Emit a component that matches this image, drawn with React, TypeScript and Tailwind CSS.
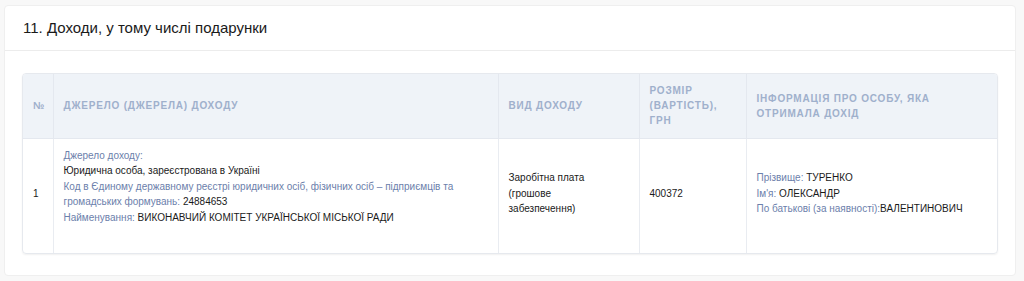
export default function App() {
  const th = "border-r border-[#e4e8ef] px-[10px] text-left align-middle text-[10px] font-bold uppercase leading-[15px] tracking-[0.8px] text-[#9fb0cc]";
  const td = "border-r border-[#e9ecf1] px-[10px] pb-[5px] align-middle text-[10px] leading-[15.5px] text-[#1a1a1a]";
  const lbl = "text-[#6c80ab]";
  return (
    <div className="min-h-[281px] w-[1024px] bg-[#f8f8f8] px-[4px] pt-[5px] font-['Liberation_Sans',Arial,sans-serif]">
      <div className="w-[1012px] rounded-[4px] border border-[#efefef] bg-white">
        <div className="flex h-[45px] items-center border-b border-[#ececec] px-[18px]">
          <h2 className="text-[15px] font-normal text-[#1a1a1a]">11. Доходи, у тому числі подарунки</h2>
        </div>
        <div className="px-[17px] pb-[21px] pt-[22px]">
          <div className="overflow-hidden rounded-[4px] border border-[#e6e9ee] shadow-[0_1px_2px_rgba(0,0,0,0.06)]">
            <table className="w-full table-fixed border-collapse">
              <colgroup>
                <col className="w-[30px]" />
                <col className="w-[445px]" />
                <col className="w-[141px]" />
                <col className="w-[107px]" />
                <col />
              </colgroup>
              <thead>
                <tr className="h-[64px] border-b border-[#e4e8ef] bg-[#eff3f8]">
                  <th className={th + " px-[8px] tracking-normal"}>№</th>
                  <th className={th}>Джерело (джерела) доходу</th>
                  <th className={th}>Вид доходу</th>
                  <th className={th}>Розмір (вартість), грн</th>
                  <th className={th + " border-r-0"}>Інформація про особу, яка отримала дохід</th>
                </tr>
              </thead>
              <tbody>
                <tr>
                  <td className={td + " px-[8px]"}>1</td>
                  <td className={td + " pb-[28px] pt-[9px]"}>
                    <div className={lbl}>Джерело доходу:</div>
                    <div>Юридична особа, зареєстрована в Україні</div>
                    <div>
                      <span className={lbl}>Код в Єдиному державному реєстрі юридичних осіб, фізичних осіб – підприємців та громадських формувань: </span>
                      24884653
                    </div>
                    <div>
                      <span className={lbl}>Найменування: </span>
                      ВИКОНАВЧИЙ КОМІТЕТ УКРАЇНСЬКОЇ МІСЬКОЇ РАДИ
                    </div>
                  </td>
                  <td className={td + " pr-[40px]"}>Заробітна плата (грошове забезпечення)</td>
                  <td className={td}>400372</td>
                  <td className={td + " border-r-0"}>
                    <div>
                      <span className={lbl}>Прізвище: </span>ТУРЕНКО
                    </div>
                    <div>
                      <span className={lbl}>Ім'я: </span>ОЛЕКСАНДР
                    </div>
                    <div>
                      <span className={lbl}>По батькові (за наявності):</span>ВАЛЕНТИНОВИЧ
                    </div>
                  </td>
                </tr>
              </tbody>
            </table>
          </div>
        </div>
      </div>
    </div>
  );
}
